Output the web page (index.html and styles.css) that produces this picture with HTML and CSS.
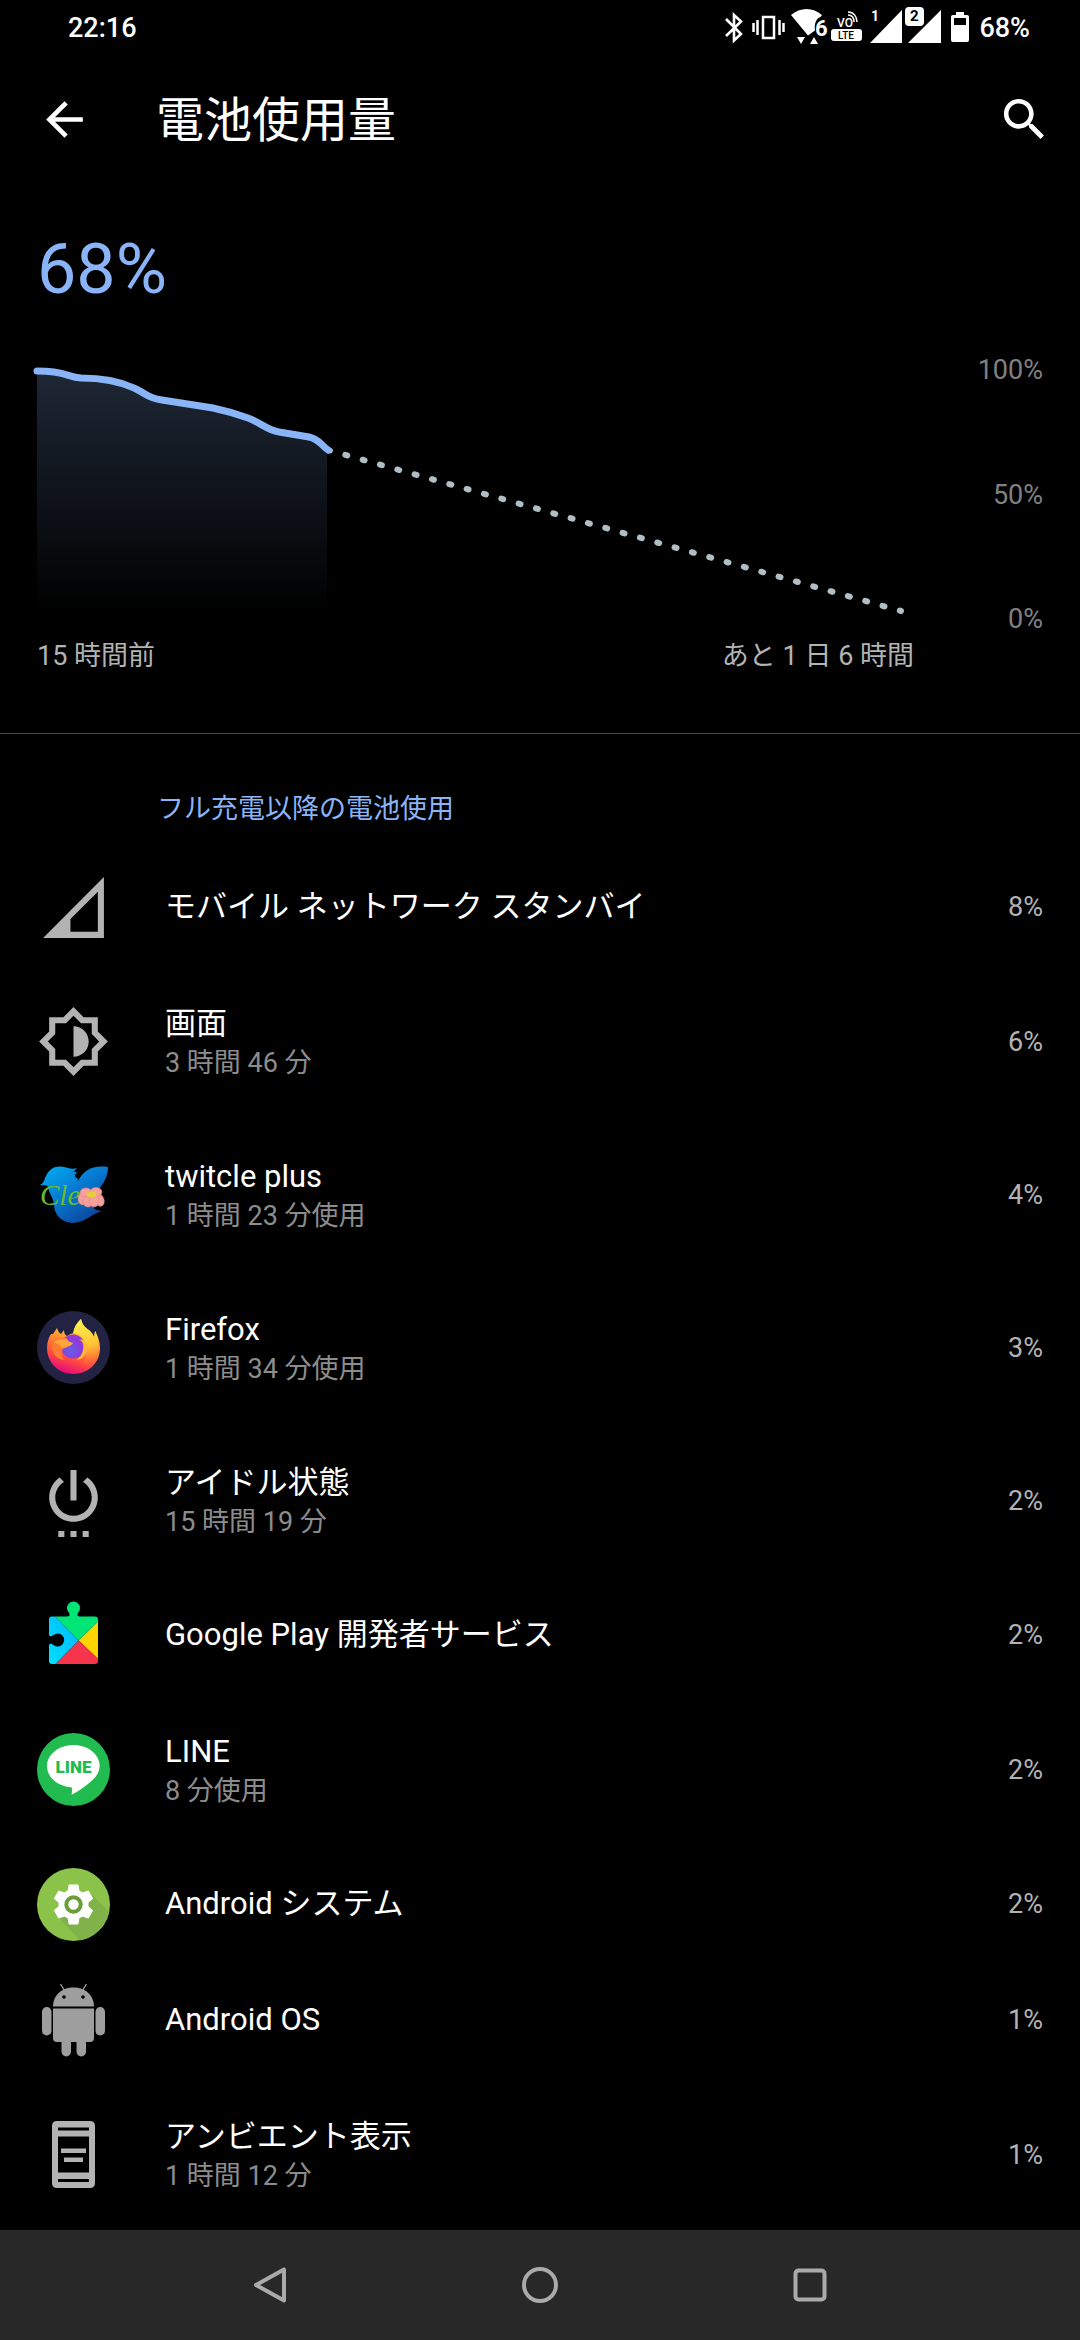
FILE: index.html
```html
<!DOCTYPE html>
<html lang="ja">
<head>
  <meta charset="UTF-8">
  <title>電池使用量</title>
  <meta name="viewport" content="width=device-width, initial-scale=1.0">
  <link rel="stylesheet" href="styles.css">
</head>
<body>

  <div class="status-bar">
    <span class="time">22:16</span>
    <div class="status-icons">
      <svg width="25" height="42" viewBox="723 7 25 42"><path d="M726 19l15 15-7 6.500V15l7 6.500-15 14.500" fill="none" stroke="#fff" stroke-width="2.600"/></svg>
      <svg width="35" height="42" viewBox="752 7 35 42"><path d="M763 17h11v21h-11zM757.500 20v15M753.500 23v9M779.500 20v15M783.500 23v9" fill="none" stroke="#fff" stroke-width="2.500"/></svg>
      <svg width="36" height="42" viewBox="791 7 36 42" fill="#fff">
        <path d="M791 15c9-8 22-8 31 0l-1 1.500c-5 2-7 7-6 14l-7 5z"/>
        <path d="M797 37h8l-4 7zM810 44h8l-4-7z"/>
        <text x="815" y="36" class="svg-bold" font-size="22">6</text>
      </svg>
      <svg width="35" height="42" viewBox="831 7 35 42" fill="#fff">
        <rect x="831" y="29" width="31" height="12" rx="3"/>
        <text x="837" y="27" class="svg-medium" font-size="12">VO</text>
        <text x="838" y="39" class="svg-medium" font-size="10" fill="#000">LTE</text>
        <path d="M848 15c4 0 6 3 6 7M848 12c6 0 9 5 9 10" fill="none" stroke="#fff" stroke-width="1.500"/>
      </svg>
      <svg width="31" height="42" viewBox="870 7 31 42" fill="#fff">
        <path d="M870 43l32-33v33z"/>
        <text x="871" y="21" class="svg-bold" font-size="14">1</text>
      </svg>
      <svg width="38" height="42" viewBox="905 7 38 42" fill="#fff">
        <path d="M908 43l33-33v33z"/>
        <rect x="904" y="6" width="21" height="21" rx="5" fill="#000"/>
        <rect x="905" y="7" width="19" height="19" rx="4"/>
        <text x="910" y="21" class="svg-bold" font-size="15" fill="#000">2</text>
      </svg>
      <svg width="28" height="42" viewBox="947 7 28 42"><path fill="#fff" fill-rule="evenodd" d="M956 12h8v3h3q2 0 2 2v23q0 2-2 2h-14q-2 0-2-2V17q0-2 2-2h3zM954 18v7h12v-7z"/></svg>
      <span>68%</span>
    </div>
  </div>

  <header class="app-bar">
    <button class="icon-button" aria-label="戻る">
      <svg width="55" height="55" viewBox="0 0 24 24" fill="#fff"><path d="M20 11H7.830l5.590-5.590L12 4l-8 8 8 8 1.410-1.410L7.830 13H20v-2z"/></svg>
    </button>
    <h1>電池使用量</h1>
    <button class="icon-button" aria-label="検索">
      <svg width="55" height="55" viewBox="0 0 24 24" fill="#fff"><path d="M15.500 14h-.79l-.28-.27C15.410 12.590 16 11.110 16 9.500 16 5.910 13.090 3 9.500 3S3 5.910 3 9.500 5.910 16 9.500 16c1.610 0 3.090-.59 4.230-1.570l.27.28v.79l5 4.990L20.490 19l-4.990-5zm-6 0C7.010 14 5 11.990 5 9.500S7.010 5 9.500 5 14 7.010 14 9.500 11.990 14 9.500 14z"/></svg>
    </button>
  </header>

  <main>
    <section class="summary">
      <div class="level">68%</div>
      <div class="chart">
        <svg viewBox="0 0 877 281">
          <defs>
            <linearGradient id="fade" gradientUnits="userSpaceOnUse" x1="0" y1="17" x2="0" y2="258">
              <stop offset="0" stop-color="#1e2735"/>
              <stop offset="1" stop-color="#000"/>
            </linearGradient>
          </defs>
          <path fill="url(#fade)" d="M0 17C29 17 30 23 44 24C80 24 94 33 99 35C110 40 110 44 125 46L176 54C190 57 200 60 211 64C224 69 232 77 242 78L272 83C282 85 284 91 290 95V260H0z"/>
          <path d="M291 96L864 257" fill="none" stroke="#b0bec5" stroke-width="6" stroke-linecap="round" stroke-dasharray="2 16"/>
          <path d="M0 17C29 17 30 23 44 24C80 24 94 33 99 35C110 40 110 44 125 46L176 54C190 57 200 60 211 64C224 69 232 77 242 78L272 83C282 85 284 91 291 96" fill="none" stroke="#8ab4f8" stroke-width="7" stroke-linecap="round"/>
        </svg>
        <div class="axis">
          <span>100%</span>
          <span>50%</span>
          <span>0%</span>
        </div>
        <div class="range">
          <span>15 時間前</span>
          <span>あと 1 日 6 時間</span>
        </div>
      </div>
    </section>

    <h2>フル充電以降の電池使用</h2>

    <ul class="usage">
      <li><a href="#">
        <svg class="icon" viewBox="0 0 24 24" fill="#b3b3b3"><path fill-rule="evenodd" d="M2 22h20V2zM20 6.800V20h-9v-4.200z"/></svg>
        <div class="label"><div class="name">モバイル ネットワーク スタンバイ</div></div>
        <span class="percent">8%</span>
      </a></li>
      <li><a href="#" class="two-line">
        <svg class="icon" viewBox="0 0 24 24" fill="#b3b3b3"><path d="M20 8.690V4h-4.690L12 .69 8.690 4H4v4.690L.69 12 4 15.310V20h4.690L12 23.310 15.310 20H20v-4.690L23.310 12 20 8.690zm-2 5.790V18h-3.520L12 20.480 9.520 18H6v-3.520L3.520 12 6 9.520V6h3.520L12 3.520 14.480 6H18v3.520L20.480 12 18 14.480zM12 7v10c2.760 0 5-2.240 5-5s-2.240-5-5-5z"/></svg>
        <div class="label"><div class="name">画面</div><div class="detail">3 時間 46 分</div></div>
        <span class="percent">6%</span>
      </a></li>
      <li><a href="#" class="two-line">
        <svg class="icon" viewBox="0 0 73 73">
          <defs>
            <linearGradient id="bird" x1="0" y1="0" x2=".8" y2="1">
              <stop offset="0" stop-color="#00b0f5"/>
              <stop offset=".5" stop-color="#0878d0"/>
              <stop offset="1" stop-color="#0b3f94"/>
            </linearGradient>
          </defs>
          <path fill="url(#bird)" d="M3 27C8 24 7 21 9 18C12 11 18 8 24 8.500C30 9 34 12 40 10C38 12 38 13 36 14L40 14C38 16 38 17 38 19C41 20 41 21 41 23C47 12 55 7 71 9C71 18 67 25 62 31L58 46C56 51 57 52 65 53C54 56 49 64 37 65C27 65 18 59 17 48C17 40 12 36 11 29C9 26 6 28 3 27z"/>
          <text x="3" y="47" class="script" font-size="29" fill="#66bb2e">Cle</text>
          <g fill="#f6a09c" stroke="#dd7f80" stroke-width=".5">
            <ellipse cx="46" cy="41" rx="5" ry="6"/>
            <ellipse cx="62.500" cy="42" rx="4.500" ry="6.500" transform="rotate(-20 62.500 42)"/>
            <ellipse cx="49" cy="34.500" rx="6" ry="4.500"/>
            <ellipse cx="59" cy="34" rx="6" ry="4.500"/>
            <ellipse cx="51" cy="43.500" rx="5" ry="5.500"/>
            <ellipse cx="57" cy="43" rx="5" ry="6"/>
          </g>
          <ellipse cx="54.500" cy="36.500" rx="5" ry="3" fill="#e5cf3a"/>
        </svg>
        <div class="label"><div class="name">twitcle plus</div><div class="detail">1 時間 23 分使用</div></div>
        <span class="percent">4%</span>
      </a></li>
      <li><a href="#" class="two-line">
        <svg class="icon" viewBox="0 0 73 73">
          <defs>
            <linearGradient id="fire" x1=".75" y1="0" x2=".4" y2="1">
              <stop offset="0" stop-color="#ffe64a"/>
              <stop offset=".4" stop-color="#ffa030"/>
              <stop offset=".75" stop-color="#ff4a40"/>
              <stop offset="1" stop-color="#e5087c"/>
            </linearGradient>
            <linearGradient id="flame" x1=".3" y1="0" x2=".5" y2="1">
              <stop offset="0" stop-color="#fff350"/>
              <stop offset=".6" stop-color="#ffc437"/>
              <stop offset="1" stop-color="#ff7139" stop-opacity="0"/>
            </linearGradient>
            <radialGradient id="globe" cx=".4" cy=".65">
              <stop offset="0" stop-color="#6560e6"/>
              <stop offset="1" stop-color="#9038d8"/>
            </radialGradient>
          </defs>
          <circle cx="36.500" cy="36.500" r="36.500" fill="#222342"/>
          <path fill="url(#fire)" d="M20 17C21 20 22 22 24 23L27 19C27 22 28 24 30 25C33 23 35 22 37 22C37 16 40 12 44 8C45 14 49 17 53 20C55 22 57 25 57 27L58 20C61 25 63 31 63 37C63 52 51 63 36.500 63C21 63 10 51 10 37C10 31 12 26 14 23L16 23z"/>
          <path fill="url(#flame)" d="M44 8C45 14 49 17 53 20C55 22 57 25 57 27L58 20C66 35 60 52 44 56C50 49 50 40 48 33C47 27 43 23 36 22C37 16 40 12 44 8z"/>
          <circle cx="36" cy="35.500" r="12" fill="url(#globe)"/>
          <path fill="#ffb636" d="M42 29C47 27 52 33 50 39C49 45 44 49 40 49C46 44 47 37 46 33C45 30 44 29 42 29z"/>
          <path fill="#ff7a33" d="M15 31C21 25 27 28 30 27L31 32L29 37C26 37 25 38 25 41C24 44 25 47 28 49C19 49 13 40 15 31z"/>
          <path fill="#ffa436" d="M17 31C23 27 27 29 30 28C31 31 34 31 36 32C35 35 31 35 29 36.500C26 37 25 37 24 36C22 33 20 33 17 31z"/>
        </svg>
        <div class="label"><div class="name">Firefox</div><div class="detail">1 時間 34 分使用</div></div>
        <span class="percent">3%</span>
      </a></li>
      <li><a href="#" class="two-line">
        <svg class="icon" viewBox="0 0 24 24" fill="#b3b3b3"><path d="M7 24h2v-2H7v2zm4 0h2v-2h-2v2zm2-22h-2v10h2V2zm3.560 2.440l-1.450 1.450C16.840 6.940 18 8.830 18 11c0 3.310-2.690 6-6 6s-6-2.690-6-6c0-2.170 1.160-4.060 2.880-5.120L7.440 4.440C5.360 5.880 4 8.280 4 11c0 4.420 3.580 8 8 8s8-3.580 8-8c0-2.720-1.360-5.120-3.440-6.560zM15 24h2v-2h-2v2z"/></svg>
        <div class="label"><div class="name">アイドル状態</div><div class="detail">15 時間 19 分</div></div>
        <span class="percent">2%</span>
      </a></li>
      <li><a href="#">
        <svg class="icon" viewBox="0 0 73 73">
          <defs>
            <clipPath id="piece"><rect x="12" y="17.500" width="49" height="47.500" rx="3"/></clipPath>
            <linearGradient id="play-blue" x1="1" y1="0" x2="0" y2="1">
              <stop offset="0" stop-color="#00b4ff"/>
              <stop offset="1" stop-color="#00e1ff"/>
            </linearGradient>
          </defs>
          <g clip-path="url(#piece)">
            <path fill="url(#play-blue)" d="M12 17h5.500l24.200 24.500L18 65.500h-6z"/>
            <path fill="#00e676" d="M17.500 17H61v5.500L41.700 41.500z"/>
            <path fill="#ffd500" d="M61 22.500v37.500L41.700 41.500z"/>
            <path fill="#f6344b" d="M18 65.500l23.700-24L61 60v5.500z"/>
          </g>
          <path fill="#00e676" d="M30 18c3-1 3-2 2-4.200a6.500 6.500 0 1 1 9 0c-1 2.200-1 3.200 2 4.200z"/>
          <path fill="#000" d="M12 36c1 2 2 1.500 4.500 0a6.500 6.500 0 1 1 0 10c-2.500-1.500-3.500-2-4.500 0z"/>
        </svg>
        <div class="label"><div class="name">Google Play 開発者サービス</div></div>
        <span class="percent">2%</span>
      </a></li>
      <li><a href="#" class="two-line">
        <svg class="icon" viewBox="0 0 73 73">
          <circle cx="36.500" cy="36.500" r="36.500" fill="#22bb50"/>
          <path fill="#fff" d="M36.500 12C51 12 62.700 21.500 62.700 33C62.700 38 60 43 55 47.500C49 53 42 58 34.700 61.700C34.500 59 36 55 34 54.300C20 53 10 44 10 33C10 21.500 22 12 36.500 12z"/>
          <text x="36.500" y="40" text-anchor="middle" class="svg-black" font-size="17" fill="#22bb50">LINE</text>
        </svg>
        <div class="label"><div class="name">LINE</div><div class="detail">8 分使用</div></div>
        <span class="percent">2%</span>
      </a></li>
      <li><a href="#">
        <svg class="icon" viewBox="0 0 73 73">
          <defs>
            <clipPath id="disc"><circle cx="36.500" cy="36.500" r="36.500"/></clipPath>
          </defs>
          <circle cx="36.500" cy="36.500" r="36.500" fill="#8bc34a"/>
          <path fill="#7fb248" clip-path="url(#disc)" d="M18 46L55 27L80 52L60 90z"/>
          <g fill="#fff">
            <circle cx="36.500" cy="36.500" r="15"/>
            <path id="tooth" d="M32.500 16.500h8q1 0 1 1l1.500 9v20l-1.500 9q0 1-1 1h-8q-1 0-1-1l-1.500-9v-20l1.500-9q0-1 1-1z"/>
            <use href="#tooth" transform="rotate(60 36.500 36.500)"/>
            <use href="#tooth" transform="rotate(120 36.500 36.500)"/>
          </g>
          <circle cx="36.500" cy="36.500" r="7.200" fill="none" stroke="#689f38" stroke-width="4"/>
        </svg>
        <div class="label"><div class="name">Android システム</div></div>
        <span class="percent">2%</span>
      </a></li>
      <li><a href="#">
        <svg class="icon" viewBox="0 0 73 73" fill="#9e9e9e">
          <path d="M16 22.500C16 11 25 3.500 36.500 3.500S57 11 57 22.500z"/>
          <path d="M23.500 0l4 6.500M49.500 0l-4 6.500" stroke="#9e9e9e" stroke-width="1.300"/>
          <circle cx="27" cy="13" r="1.800" fill="#000"/>
          <circle cx="46" cy="13" r="1.800" fill="#000"/>
          <path d="M16 24.500h41V54q0 4-4 4H20q-4 0-4-4z"/>
          <rect x="5" y="23" width="9.500" height="28.500" rx="4.700"/>
          <rect x="58.500" y="23" width="9.500" height="28.500" rx="4.700"/>
          <rect x="24.500" y="50" width="9.500" height="22.500" rx="4.700"/>
          <rect x="39.500" y="50" width="9.500" height="22.500" rx="4.700"/>
        </svg>
        <div class="label"><div class="name">Android OS</div></div>
        <span class="percent">1%</span>
      </a></li>
      <li><a href="#" class="two-line">
        <svg class="icon" viewBox="0 0 73 73" fill="#b3b3b3">
          <path fill-rule="evenodd" d="M20 3h33q5 0 5 5v57q0 5-5 5H20q-5 0-5-5V8q0-5 5-5zM21 9.500v3h31v-3zM21 18.500v36h31v-36zM21 61v3h31v-3z"/>
          <path d="M24 30.500h25V35H24zM27 39.500h19V44H27z"/>
        </svg>
        <div class="label"><div class="name">アンビエント表示</div><div class="detail">1 時間 12 分</div></div>
        <span class="percent">1%</span>
      </a></li>
    </ul>
  </main>

  <nav class="nav-bar">
    <button aria-label="戻る"><svg width="44" height="44" viewBox="0 0 44 44"><path d="M8 22L36 6.500v31z"/></svg></button>
    <button aria-label="ホーム"><svg width="44" height="44" viewBox="0 0 44 44"><circle cx="22" cy="22" r="16"/></svg></button>
    <button aria-label="最近使ったアプリ"><svg width="44" height="44" viewBox="0 0 44 44"><rect x="7.500" y="7.500" width="29" height="29" rx="3"/></svg></button>
  </nav>

</body>
</html>
```

FILE: styles.css
```css
* { box-sizing: border-box; margin: 0; padding: 0; }

body {
  display: flex;
  flex-direction: column;
  height: 100vh;
  background: #000;
  color: #fff;
  font-family: Roboto, "Noto Sans CJK JP", sans-serif;
  font-size: 27px;
}

button {
  background: none;
  border: none;
  cursor: pointer;
}

svg {
  display: block;
  flex-shrink: 0;
}

/* status bar */
.status-bar {
  display: flex;
  justify-content: space-between;
  align-items: center;
  height: 56px;
  flex-shrink: 0;
  padding: 0 50px 0 68px;
  font-weight: 500;
  line-height: 32px;
}

.status-icons {
  display: flex;
  align-items: center;
  gap: 4px;
}

.status-icons svg {
  overflow: visible;
}

.svg-medium { font-weight: 500; }
.svg-bold { font-weight: 700; }
.svg-black { font-weight: 900; }
.script {
  font-family: "Liberation Serif", serif;
  font-style: italic;
}

/* app bar */
.app-bar {
  display: flex;
  align-items: center;
  height: 126px;
  flex-shrink: 0;
  padding: 0 28px 0 37px;
}

.app-bar h1 {
  flex: 1;
  margin-left: 64px;
  padding-top: 4px;
  font-size: 48px;
  font-weight: 400;
  line-height: 64px;
}

main {
  flex: 1;
  min-height: 0;
  overflow-y: auto;
  scrollbar-width: none;
}

/* battery level and graph */
.summary {
  padding: 46px 37px 59px;
  border-bottom: 1px solid #4a4a4a;
}

.level {
  margin-bottom: 44px;
  color: #8ab4f8;
  font-size: 70px;
  line-height: 82px;
}

.chart {
  display: grid;
  grid-template-columns: 1fr 129px;
  row-gap: 3px;
}

.chart svg {
  width: 100%;
  overflow: visible;
}

.axis {
  display: flex;
  flex-direction: column;
  justify-content: space-between;
  align-items: flex-end;
  color: #808080;
  line-height: 32px;
}

.range {
  display: flex;
  justify-content: space-between;
  color: #b3b3b3;
  line-height: 36px;
}

/* usage list */
h2 {
  padding: 57px 37px 22px 157px;
  color: #8ab4f8;
  font-size: 27px;
  font-weight: 400;
  line-height: 36px;
}

.usage {
  list-style: none;
}

.usage a {
  display: flex;
  align-items: center;
  height: 116px;
  padding: 0 37px;
  color: #fff;
  text-decoration: none;
}

.usage a.two-line {
  height: 153px;
}

.icon {
  width: 73px;
  height: 73px;
}

.label {
  flex: 1;
  margin-left: 55px;
}

.name {
  font-size: 31px;
  line-height: 42px;
}

.detail {
  color: #8c8c8c;
  line-height: 36px;
}

.percent {
  color: #b3b3b3;
}

/* system navigation */
.nav-bar {
  display: grid;
  grid-template-columns: repeat(3, 1fr);
  height: 110px;
  flex-shrink: 0;
  padding: 0 12.5%;
  background: #282828;
}

.nav-bar button {
  display: flex;
  justify-content: center;
  align-items: center;
}

.nav-bar svg {
  fill: none;
  stroke: #aaa;
  stroke-width: 4;
  stroke-linejoin: round;
}
```
